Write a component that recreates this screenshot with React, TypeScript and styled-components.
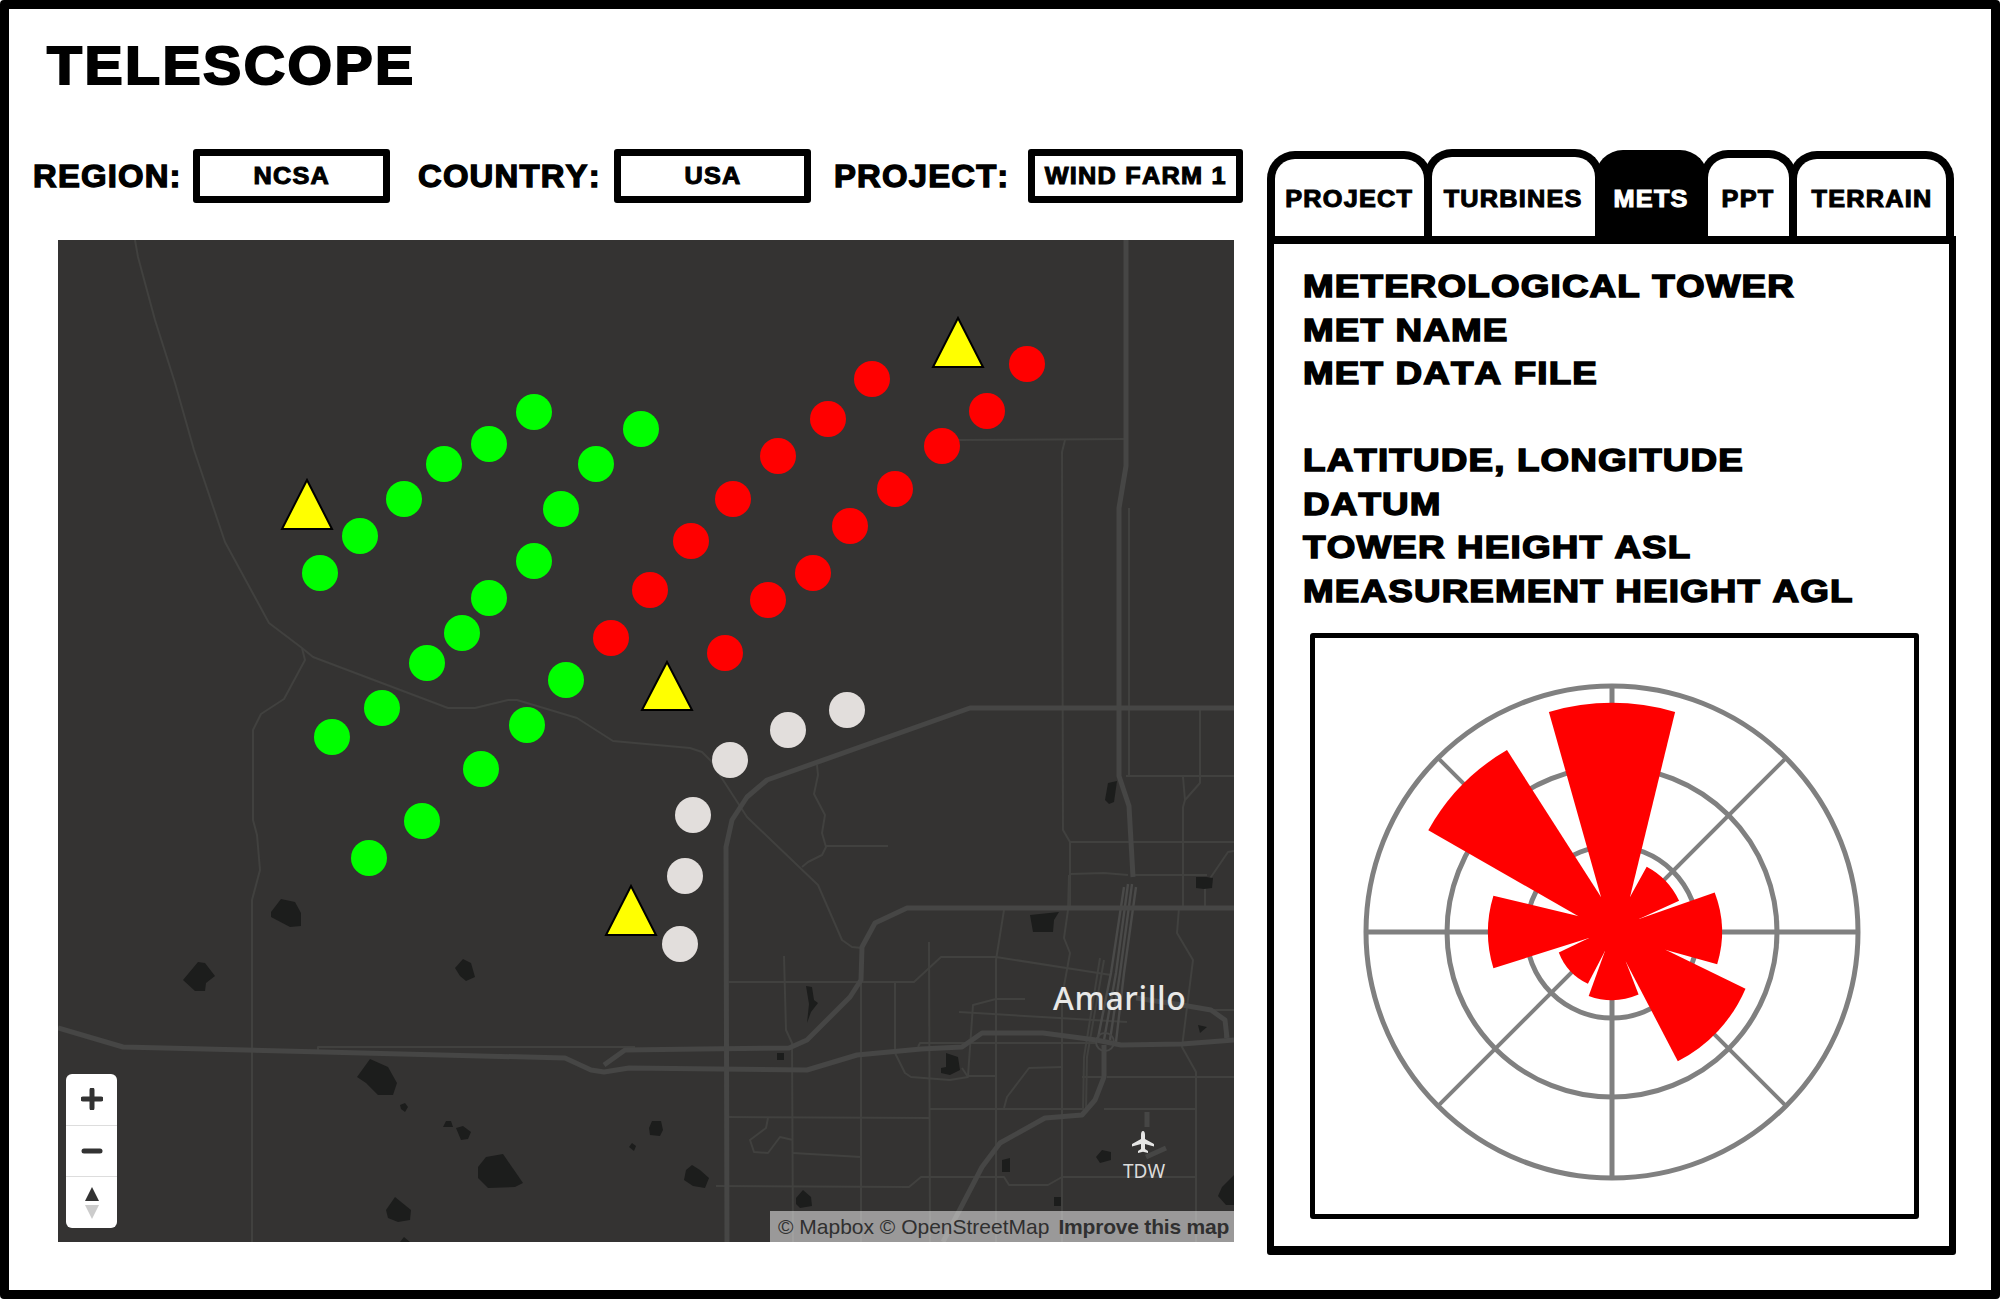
import React from 'react'
import styled, { createGlobalStyle } from 'styled-components'

const GlobalStyle = createGlobalStyle`
  html, body {
    margin: 0;
    padding: 0;
    background: #fff;
  }
  * {
    box-sizing: border-box;
  }
`

const Frame = styled.div`
  width: 2000px;
  height: 1299px;
  border: 9px solid #000;
  border-radius: 4px;
  background: #fff;
  color: #000;
  font-family: 'Liberation Sans', Arial, sans-serif;
  font-weight: 700;
  font-kerning: none;
  overflow: hidden;
`

const TitleBar = styled.div`
  height: 140px;
  padding: 28px 0 0 38px;
`

const Title = styled.h1`
  display: inline-block;
  margin: 0;
  font-size: 54px;
  line-height: 56px;
  letter-spacing: 2.3px;
  -webkit-text-stroke: 2px #000;
  transform: scaleX(1.06);
  transform-origin: left center;
`

const Body = styled.div`
  display: flex;
  gap: 24px;
  padding-left: 24px;
`

const LeftColumn = styled.div`
  width: 1210px;
  flex-shrink: 0;
`

const Selectors = styled.div`
  display: flex;
  align-items: center;
  height: 54px;
`

const SelectorLabel = styled.span<{ $width: number }>`
  flex: 0 0 ${(p) => p.$width}px;
  padding-top: 2px;
  font-size: 31px;
  letter-spacing: 1.1px;
  -webkit-text-stroke: 1.3px #000;
  white-space: nowrap;
  transform: scaleX(1.06);
  transform-origin: left center;
`

const SelectBox = styled.div<{ $width: number; $gap: number }>`
  display: flex;
  align-items: center;
  justify-content: center;
  flex: 0 0 ${(p) => p.$width}px;
  height: 54px;
  margin-right: ${(p) => p.$gap}px;
  border: 7.5px solid #000;
  border-radius: 3px;
`

const BoxText = styled.span`
  font-size: 23px;
  letter-spacing: 1.1px;
  -webkit-text-stroke: 1px #000;
  white-space: nowrap;
  transform: scaleX(1.1);
`

const MapArea = styled.div`
  position: relative;
  width: 1176px;
  height: 1002px;
  margin: 37px 0 0 25px;
  background: #343332;
  overflow: hidden;
`

const MapSvg = styled.svg`
  display: block;
  width: 100%;
  height: 100%;
`

const CityLabel = styled.span`
  position: absolute;
  left: 995px;
  top: 736px;
  font-family: 'Noto Sans', sans-serif;
  font-weight: 500;
  font-size: 32px;
  line-height: 44px;
  letter-spacing: 0.6px;
  color: #e9e9e8;
`

const AirportLabel = styled.span`
  position: absolute;
  left: 1065px;
  top: 919px;
  font-family: 'Noto Sans', sans-serif;
  font-weight: 400;
  font-size: 19px;
  line-height: 24px;
  color: #dcdcdb;
`

const ZoomControl = styled.div`
  position: absolute;
  left: 8px;
  bottom: 14px;
  width: 51px;
  height: 154px;
  display: flex;
  flex-direction: column;
  background: #fff;
  border-radius: 6px;
  overflow: hidden;
`

const ZoomButton = styled.div`
  display: flex;
  flex: 1;
  align-items: center;
  justify-content: center;
  & + & {
    border-top: 1.5px solid #ddd;
  }
`

const Attribution = styled.div`
  position: absolute;
  right: 0;
  bottom: 0;
  display: flex;
  gap: 9px;
  align-items: center;
  width: 464px;
  height: 31px;
  padding-left: 8px;
  background: rgba(255, 255, 255, 0.5);
  color: #303030;
  font-size: 21px;
  font-weight: 400;
  font-kerning: normal;
  white-space: nowrap;
`

const AttributionLink = styled.span`
  font-weight: 700;
  letter-spacing: -0.2px;
`

const Panel = styled.div`
  width: 689px;
  flex-shrink: 0;
`

const TabRow = styled.div`
  display: flex;
  align-items: flex-end;
  height: 87px;
`

const Tab = styled.div<{ $width: number; $active?: boolean; $height: number }>`
  display: flex;
  justify-content: center;
  width: ${(p) => p.$width}px;
  height: ${(p) => p.$height}px;
  margin-left: -8px;
  padding-top: ${(p) => p.$height - 49 - 8}px;
  border: 8px solid #000;
  border-bottom: 0;
  border-radius: 28px 28px 0 0;
  background: ${(p) => (p.$active ? '#000' : '#fff')};
  color: ${(p) => (p.$active ? '#fff' : '#000')};
  &:first-child {
    margin-left: 0;
  }
`

const TabLabel = styled.span<{ $active?: boolean }>`
  font-size: 23px;
  line-height: 24px;
  letter-spacing: 1.1px;
  -webkit-text-stroke: 1px ${(p) => (p.$active ? '#fff' : '#000')};
  transform: scaleX(1.1);
  white-space: nowrap;
`

const PanelBody = styled.div`
  height: 1019px;
  padding: 21px 0 0 29px;
  border: solid #000;
  border-width: 8px 7px 9px;
  border-radius: 0 0 3px 3px;
`

const InfoGroup = styled.div`
  & + & {
    margin-top: 43.5px;
  }
`

const InfoLine = styled.div`
  font-size: 32px;
  line-height: 43.5px;
  letter-spacing: 1px;
  -webkit-text-stroke: 1.5px #000;
  white-space: nowrap;
  transform: scaleX(1.15);
  transform-origin: left center;
`

const RoseBox = styled.div`
  width: 609px;
  height: 586px;
  margin: 20px 0 0 7px;
  border: 5px solid #000;
  border-radius: 3px;
`

const RoseSvg = styled.svg`
  display: block;
  width: 599px;
  height: 576px;
`

const majorRoads = [
  '58,1028 123,1047 565,1058 591,1070 604,1072 629,1068 718,1069 807,1070 857,1055 921,1049 962,1047 982,1033 1043,1033 1096,1040 1121,1045 1182,1044 1234,1040',
  '604,1065 625,1050 700,1049 789,1048 807,1040 850,997 861,980 862,947 875,923 907,908 1234,908',
  '727,1242 726,847 732,820 747,797 767,780 970,708 1234,708',
  '1126,240 1126,466 1119,508 1119,776 1129,806 1133,877',
  '1104,1045 1104,1077 1095,1100 1082,1115 1045,1118 1000,1143 982,1167 943,1242',
  '1182,1005 1211,1010 1225,1020 1227,1038',
  '1136,998 1182,1005',
]

const minorRoads = [
  '135,240 138,257 155,320 175,383 194,450 225,542 269,623 302,648 313,657 448,708 475,708 508,700 517,700 577,718 613,741 690,748 702,752 712,762 723,780 747,817 818,885 842,940 852,947 862,948',
  '802,867 808,862 822,855 826,847 822,833 825,815 814,794 818,775 817,765',
  '826,846 888,846',
  '302,648 305,660 284,699 261,714 253,730 253,820 257,835 260,870 252,900 252,1242',
  '318,1050 318,1047 635,1047',
  '958,440 1125,439',
  '1065,440 1062,452 1063,830 1070,842 1070,907',
  '1070,842 1234,842',
  '1070,874 1104,873 1128,875',
  '1134,875 1207,875',
  '1205,907 1205,887 1211,877 1228,852 1234,851',
  '1126,776 1234,776',
  '1200,708 1200,783 1185,800 1183,807 1183,907',
  '1183,777 1185,800',
  '1129,508 1129,776',
  '929,942 930,1242',
  '1004,910 996,960 996,1242',
  '1069,875 1068,910 1064,938 1070,953 1062,997 1062,1242',
  '784,956 786,1030 792,1043 793,1242',
  '895,983 895,1053 905,1073 911,1077 950,1080 968,1077 962,1068',
  '861,980 861,1242',
  '729,982 914,982 941,957 996,957 1111,975',
  '1179,908 1177,933 1193,960 1182,1047 1196,1072 1196,1242',
  '959,1012 1127,1022',
  '968,1076 973,1005 996,999 1025,999',
  '918,1047 920,1043 1096,1043',
  '1107,1077 1234,1077',
  '968,1076 996,1076',
  '1082,1077 1104,1077',
  '1004,1108 1007,1097 1029,1068 1062,1067',
  '930,1109 1082,1109',
  '1104,1109 1196,1109',
  '727,1117 929,1118',
  '793,1153 861,1157',
  '768,1118 766,1128 750,1140 754,1152 768,1153 780,1137 793,1140',
  '716,1186 909,1187 921,1177 1004,1177 1009,1185 1048,1185 1062,1177 1196,1177',
  '1100,958 1084,1057 1083,1110',
  '1104,960 1087,1057 1086,1110',
  '1211,1010 1234,1010',
  '1225,1020 1225,1038',
]

const bundleLanes = [
  '1124,887 1111,973 1098,1038',
  '1128,884 1116,973 1104,1040',
  '1132,884 1120,973 1110,1040',
  '1136,887 1124,973 1116,1042',
]

const lakes = [
  '271,912 281,899 295,902 301,913 301,926 290,927 271,917',
  '183,980 198,962 205,963 215,976 206,983 205,991 195,991',
  '455,968 463,959 471,963 475,977 466,981 460,976',
  '357,1077 370,1059 388,1067 397,1083 393,1095 378,1095 366,1083',
  '400,1105 405,1103 408,1107 405,1112 401,1109',
  '443,1127 446,1121 451,1121 453,1127',
  '456,1128 463,1126 471,1132 468,1139 461,1140',
  '478,1167 486,1157 503,1154 523,1183 515,1187 488,1188 478,1178',
  '386,1210 395,1197 411,1210 410,1220 398,1222 388,1218',
  '400,1242 404,1237 410,1242',
  '629,1147 632,1143 636,1146 634,1151',
  '650,1135 649,1128 652,1121 661,1121 663,1130 660,1136',
  '686,1170 692,1165 700,1170 709,1178 705,1188 693,1186 684,1180',
  '1030,915 1059,912 1054,920 1053,932 1033,932',
  '1105,800 1108,783 1117,781 1114,802 1109,804',
  '1196,877 1206,877 1213,878 1212,888 1204,889 1196,888',
  '806,986 812,987 814,1000 818,1003 811,1012 807,1023 809,1004',
  '777,1053 784,1053 784,1060 777,1060',
  '946,1053 958,1057 960,1070 950,1075 941,1073 941,1068 946,1067',
  '1096,1157 1102,1150 1111,1152 1111,1160 1100,1163',
  '1002,1160 1010,1158 1010,1172 1002,1172',
  '1054,1197 1061,1197 1061,1206 1054,1206',
  '796,1198 803,1190 811,1197 812,1206 800,1208 796,1204',
  '1234,1175 1222,1187 1218,1196 1226,1205 1234,1205',
  '1198,1025 1207,1027 1200,1033',
]

const greenDots = [
  [320, 573], [360, 536], [404, 499], [444, 464], [489, 444], [534, 412],
  [641, 429], [596, 464], [561, 509], [534, 561], [489, 598], [462, 633],
  [427, 663], [382, 708], [332, 737], [566, 680], [527, 725], [481, 769],
  [422, 821], [369, 858],
]

const redDots = [
  [1027, 364], [987, 411], [942, 446], [895, 489], [850, 526], [813, 573],
  [768, 600], [725, 653], [872, 379], [828, 419], [778, 456], [733, 499],
  [691, 541], [650, 590], [611, 638],
]

const whiteDots = [[847, 710], [788, 730], [730, 760], [693, 815], [685, 876], [680, 944]]

const metTowers = [
  [958, 318, 367],
  [307, 480, 529],
  [667, 662, 710],
  [631, 886, 935],
]

// the gaps between sectors stop short of the centre, so each sector has its own inner corners
const windSectors = [
  { from: -16, to: 16, radius: 229, start: '-11 -35', end: '18 -35' },
  { from: -61, to: -30, radius: 210, start: '-34 -16', end: '-11 -35' },
  { from: -107, to: -73, radius: 124, start: '-23 6', end: '-34 -16' },
  { from: 69, to: 107, radius: 110, start: '27 -13', end: '54 18' },
  { from: 113, to: 153, radius: 145, start: '54 18', end: '14 30' },
  { from: 28, to: 65, radius: 74, start: '18 -35', end: '27 -13' },
  { from: 157, to: 200, radius: 68, start: '14 30', end: '-7 19' },
  { from: 205, to: 249, radius: 57, start: '-7 19', end: '-23 6' },
]

const polar = (angle: number, radius: number) => {
  const a = (angle * Math.PI) / 180
  return `${(radius * Math.sin(a)).toFixed(1)} ${(-radius * Math.cos(a)).toFixed(1)}`
}

const tabs = [
  { label: 'PROJECT', width: 165, height: 85 },
  { label: 'TURBINES', width: 179, height: 87 },
  { label: 'METS', width: 113, height: 86, active: true },
  { label: 'PPT', width: 97, height: 86 },
  { label: 'TERRAIN', width: 165, height: 85 },
]

const WindRose = () => (
  <RoseSvg viewBox="-297 -294 599 576">
    <g fill="none" stroke="#808080" strokeWidth="5">
      <circle r="246" />
      <circle r="165" />
      <circle r="86" />
      {[0, 45, 90, 135, 180, 225, 270, 315].map((angle) => (
        <path key={angle} d={`M0 0 L${polar(angle, 246)}`} strokeWidth={angle % 90 === 0 ? 5 : 4} />
      ))}
    </g>
    <polygon points="-11,-35 18,-35 27,-13 54,18 14,30 -7,19 -23,6 -34,-16" fill="#ff0000" />
    {windSectors.map((s) => (
      <path
        key={s.from}
        d={`M${s.start} L${polar(s.from, s.radius)} A${s.radius} ${s.radius} 0 0 1 ${polar(s.to, s.radius)} L${s.end} L0 0 Z`}
        fill="#ff0000"
      />
    ))}
  </RoseSvg>
)

const SiteMap = () => (
  <MapArea>
    <MapSvg viewBox="58 240 1176 1002">
      <g fill="none" stroke="#41413f" strokeWidth="2" strokeLinejoin="round">
        {minorRoads.map((points) => (
          <polyline key={points} points={points} />
        ))}
      </g>
      <g fill="none" stroke="#4a4a49" strokeWidth="2.4">
        {bundleLanes.map((points) => (
          <polyline key={points} points={points} />
        ))}
      </g>
      <g fill="none" stroke="#464645" strokeWidth="5" strokeLinejoin="round">
        {majorRoads.map((points) => (
          <polyline key={points} points={points} />
        ))}
        <circle cx="1105" cy="1042" r="9" strokeWidth="2" />
        <path d="M1147 1112 V1127 M1146 1157 L1166 1148" strokeWidth="5" />
      </g>
      <g fill="#1c1d1c">
        {lakes.map((points) => (
          <polygon key={points} points={points} />
        ))}
      </g>
      <path
        d="M1143 1131 c1.500 0 2 2 2 4 v4 l9 5 v2.500 l-9 -2.500 v5 l3 2 v2 l-5 -1.200 l-5 1.200 v-2 l3 -2 v-5 l-9 2.500 v-2.500 l9 -5 v-4 c0 -2 .5 -4 2 -4 z"
        fill="#e6e6e5"
      />
      {greenDots.map(([x, y]) => (
        <circle key={`${x}-${y}`} cx={x} cy={y} r="18" fill="#00ff00" />
      ))}
      {redDots.map(([x, y]) => (
        <circle key={`${x}-${y}`} cx={x} cy={y} r="18" fill="#ff0000" />
      ))}
      {whiteDots.map(([x, y]) => (
        <circle key={`${x}-${y}`} cx={x} cy={y} r="18" fill="#e2dedc" />
      ))}
      {metTowers.map(([x, top, base]) => (
        <polygon
          key={x}
          points={`${x},${top} ${x + 25},${base} ${x - 25},${base}`}
          fill="#ffff00"
          stroke="#000"
          strokeWidth="2"
        />
      ))}
    </MapSvg>
    <CityLabel>Amarillo</CityLabel>
    <AirportLabel>TDW</AirportLabel>
    <ZoomControl>
      <ZoomButton>
        <svg width="22" height="22" viewBox="0 0 22 22">
          <path d="M11 2 V20 M2 11 H20" stroke="#333" strokeWidth="5" strokeLinecap="round" />
        </svg>
      </ZoomButton>
      <ZoomButton>
        <svg width="22" height="22" viewBox="0 0 22 22">
          <path d="M3 11 H19" stroke="#333" strokeWidth="5" strokeLinecap="round" />
        </svg>
      </ZoomButton>
      <ZoomButton>
        <svg width="16" height="34" viewBox="0 0 16 34">
          <polygon points="8,1 15,15 1,15" fill="#333" />
          <polygon points="8,33 15,19 1,19" fill="#ccc" />
        </svg>
      </ZoomButton>
    </ZoomControl>
    <Attribution>
      <span>© Mapbox © OpenStreetMap</span>
      <AttributionLink>Improve this map</AttributionLink>
    </Attribution>
  </MapArea>
)

const App = () => (
  <Frame>
    <GlobalStyle />
    <TitleBar>
      <Title>TELESCOPE</Title>
    </TitleBar>
    <Body>
      <LeftColumn>
        <Selectors>
          <SelectorLabel $width={160}>REGION:</SelectorLabel>
          <SelectBox $width={197} $gap={28}>
            <BoxText>NCSA</BoxText>
          </SelectBox>
          <SelectorLabel $width={196}>COUNTRY:</SelectorLabel>
          <SelectBox $width={197} $gap={23}>
            <BoxText>USA</BoxText>
          </SelectBox>
          <SelectorLabel $width={194}>PROJECT:</SelectorLabel>
          <SelectBox $width={215} $gap={0}>
            <BoxText>WIND FARM 1</BoxText>
          </SelectBox>
        </Selectors>
        <SiteMap />
      </LeftColumn>
      <Panel>
        <TabRow>
          {tabs.map((tab) => (
            <Tab key={tab.label} $width={tab.width} $height={tab.height} $active={tab.active}>
              <TabLabel $active={tab.active}>{tab.label}</TabLabel>
            </Tab>
          ))}
        </TabRow>
        <PanelBody>
          <InfoGroup>
            <InfoLine>METEROLOGICAL TOWER</InfoLine>
            <InfoLine>MET NAME</InfoLine>
            <InfoLine>MET DATA FILE</InfoLine>
          </InfoGroup>
          <InfoGroup>
            <InfoLine>LATITUDE, LONGITUDE</InfoLine>
            <InfoLine>DATUM</InfoLine>
            <InfoLine>TOWER HEIGHT ASL</InfoLine>
            <InfoLine>MEASUREMENT HEIGHT AGL</InfoLine>
          </InfoGroup>
          <RoseBox>
            <WindRose />
          </RoseBox>
        </PanelBody>
      </Panel>
    </Body>
  </Frame>
)

export default App
